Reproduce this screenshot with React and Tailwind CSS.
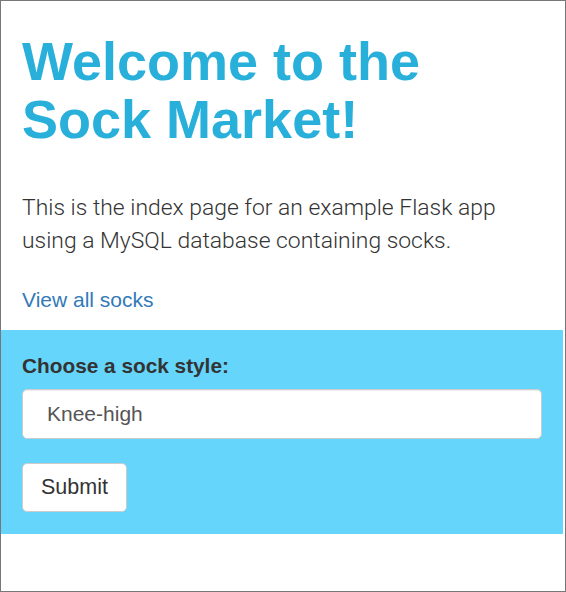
export default function App() {
  return (
    <div className="w-[566px] h-[592px] border border-[#777777] bg-white font-['Liberation_Sans',Arial,sans-serif]">
      <div className="px-[21px] pt-[31px]">
        <h1 className="text-[54px] leading-[58px] font-bold text-[#29b0da]">
          Welcome to the<br />Sock Market!
        </h1>
        <p className="mt-[43px] text-[22.9px] leading-[33px] font-light text-[#333333] font-['Roboto',sans-serif]">
          This is the index page for an example Flask app using a MySQL database containing socks.
        </p>
        <a href="#" className="block mt-[29px] text-[21px] leading-[28px] text-[#337ab7]">
          View all socks
        </a>
      </div>
      <form className="mt-[16px] mr-[2px] bg-[#65d5fb] px-[21px] pt-[24px] pb-[22px]" onSubmit={e => e.preventDefault()}>
        <label className="block text-[20.8px] leading-[24px] font-bold text-[#333333]">Choose a sock style:</label>
        <div className="mt-[11px] h-[50px] flex items-center bg-white border border-[#cccccc] rounded-[5px] pl-[24px] text-[21px] text-[#555555] shadow-[inset_0_1px_1px_rgba(0,0,0,0.075)]">
          Knee-high
        </div>
        <button type="submit" className="mt-[24px] h-[49px] w-[105px] bg-white border border-[#cccccc] rounded-[5px] text-[21.5px] text-[#333333]">
          Submit
        </button>
      </form>
    </div>
  );
}
